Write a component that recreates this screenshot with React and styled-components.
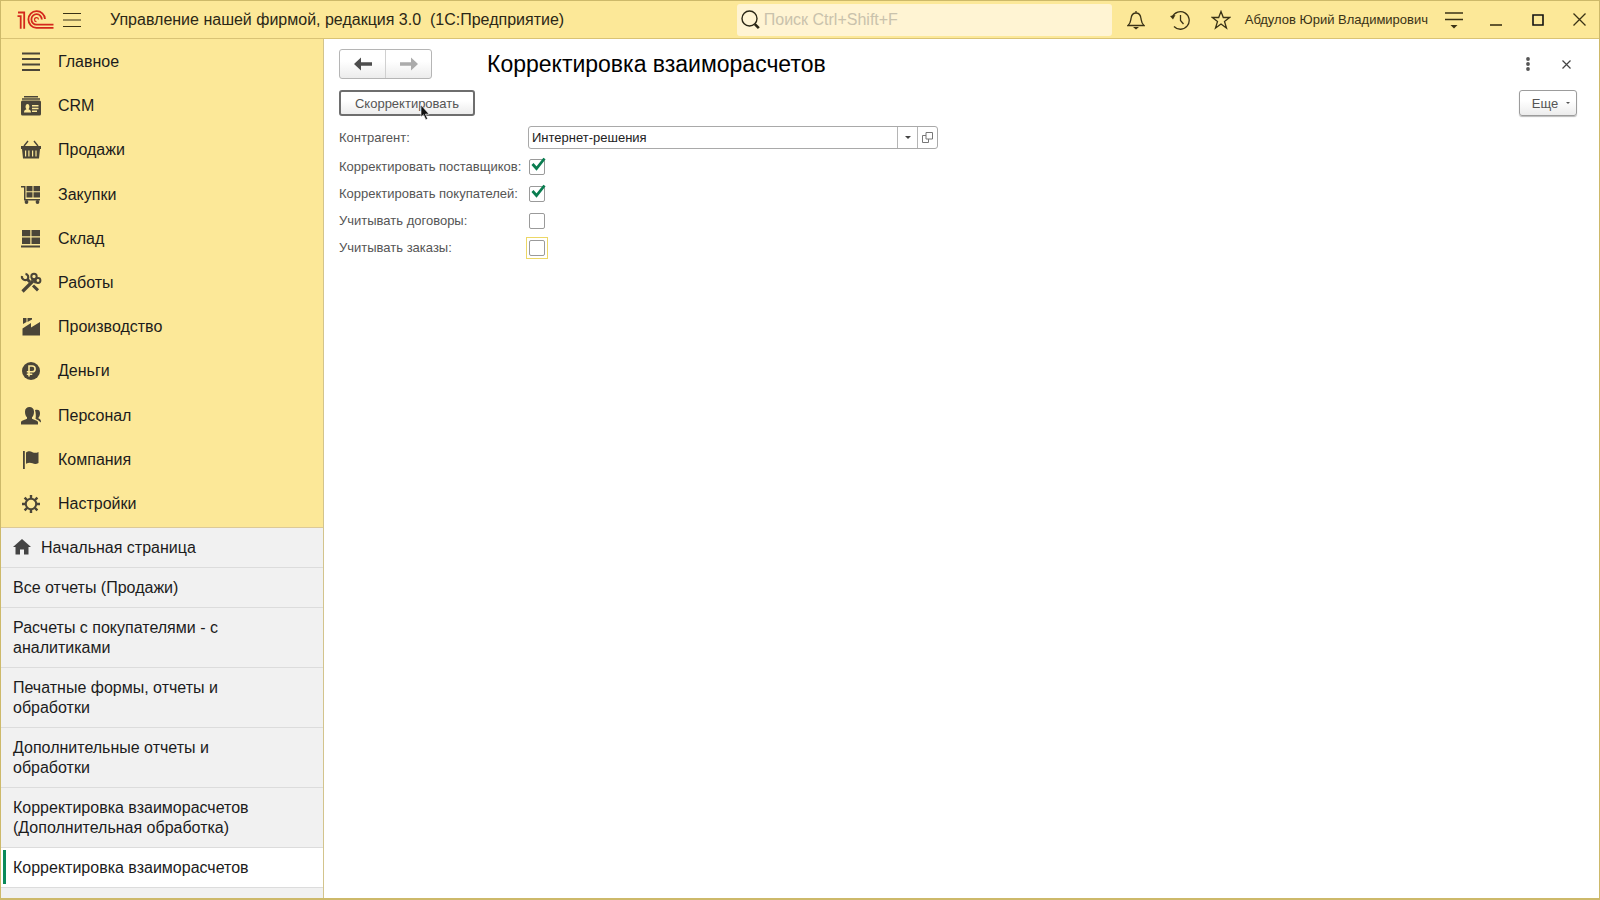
import { useState } from "react";
import styled, { createGlobalStyle } from "styled-components";

const GlobalStyle = createGlobalStyle`
    * {
        box-sizing: border-box;
    }
    body {
        margin: 0;
        font-family: "Liberation Sans", Arial, sans-serif;
        font-size: 16px;
        color: #1c1c1c;
    }
    button, input {
        font-family: inherit;
    }
`

const Window = styled.div`
    display: flex;
    flex-direction: column;
    min-height: 100vh;
    border: 1px solid #cdb96a;
    border-bottom-width: 2px;
    background: #fff;
`

const TopBar = styled.header`
    display: flex;
    align-items: center;
    height: 38px;
    padding-left: 16px;
    background: #fce898;
    border-bottom: 1px solid #d9c375;
`

const AppName = styled.div`
    flex: 1;
    padding-left: 20px;
    white-space: nowrap;
    color: #2b2716;
`

const IconButton = styled.button`
    display: flex;
    align-items: center;
    justify-content: center;
    width: ${(props) => props.$width || 42}px;
    height: 32px;
    padding: 0;
    border: 0;
    background: none;
    color: #3a3216;
`

const Search = styled.label`
    display: flex;
    align-items: center;
    gap: 4px;
    width: 375px;
    height: 32px;
    padding-left: 4px;
    border-radius: 3px;
    background: #fff4d3;
    color: #2b2716;
`

const SearchInput = styled.input`
    flex: 1;
    min-width: 0;
    padding: 0;
    border: 0;
    outline: 0;
    background: none;
    font-size: 16px;
    &::placeholder {
        color: #c9c2ac;
        opacity: 1;
    }
`

const UserName = styled.a`
    margin: 0 5px 0 3px;
    font-size: 13px;
    color: #3a3216;
    text-decoration: none;
    white-space: nowrap;
`

const Body = styled.div`
    display: flex;
    flex: 1;
`

const Sidebar = styled.aside`
    display: flex;
    flex-direction: column;
    width: 323px;
    flex-shrink: 0;
    border-right: 1px solid #d3c48c;
    background: #f1f1f1;
`

const Sections = styled.nav`
    display: flex;
    flex-direction: column;
    height: 489px;
    padding: 1px 0;
    background: #fce898;
    border-bottom: 1px solid #dcc998;
`

const Section = styled.a`
    display: flex;
    flex: 1;
    align-items: center;
    gap: 16px;
    padding-left: 19px;
    color: #1c1c1c;
    text-decoration: none;
    svg {
        color: #4a4538;
    }
`

const OpenPages = styled.nav`
    display: flex;
    flex-direction: column;
`

const OpenPage = styled.a`
    display: flex;
    align-items: center;
    gap: 10px;
    padding: 10px 60px 9px 12px;
    border-bottom: 1px solid #dcdcdc;
    line-height: 20px;
    color: #1c1c1c;
    text-decoration: none;
    background: ${(props) => (props.$active ? 'linear-gradient(#0a8a5a, #0a8a5a) 2px 2px / 3px 34px no-repeat #fff' : 'none')};
    svg {
        color: #444;
    }
`

const Page = styled.main`
    flex: 1;
    padding: 10px 14px 0 15px;
`

const PageHeader = styled.div`
    display: flex;
    align-items: center;
    height: 30px;
`

const History = styled.div`
    display: flex;
    width: 93px;
    height: 30px;
    margin-right: 55px;
    border: 1px solid #b5b5b5;
    border-radius: 3px;
    background: linear-gradient(#fff 40%, #ececec);
`

const HistoryButton = styled.button`
    display: flex;
    flex: 1;
    align-items: center;
    justify-content: center;
    padding: 0;
    border: 0;
    background: none;
    color: ${(props) => (props.disabled ? '#ababab' : '#4d4d4d')};
    & + & {
        border-left: 1px solid #d0d0d0;
    }
`

const Title = styled.h1`
    flex: 1;
    margin: 0;
    font-size: 23px;
    font-weight: 400;
    color: #000;
`

const CommandBar = styled.div`
    display: flex;
    justify-content: space-between;
    margin: 11px 8px 8px 0;
`

const CommandButton = styled.button`
    position: relative;
    display: flex;
    align-items: center;
    justify-content: center;
    gap: 8px;
    width: ${(props) => props.$width}px;
    height: 26px;
    padding: 0;
    border: ${(props) => (props.$primary ? '2px solid #6e6e6e' : '1px solid #9c9c9c')};
    border-radius: 3px;
    background: linear-gradient(#fff 40%, #ececec);
    box-shadow: ${(props) => (props.$primary ? 'none' : '0 1px 1px #bbb')};
    font-size: 13px;
    color: #555;
`

const MoreButton = styled(CommandButton)`
    padding-left: 6px;
`

const Pointer = styled.svg`
    position: absolute;
    left: 79px;
    top: 12px;
`

const Field = styled.div`
    display: flex;
    align-items: center;
    height: 27px;
    font-size: 13px;
    color: #555;
    label {
        width: 189px;
        white-space: nowrap;
    }
`

const ComboField = styled(Field)`
    margin-bottom: 2px;
`

const ComboBox = styled.div`
    display: flex;
    width: 410px;
    height: 23px;
    border: 1px solid #a9a9a9;
    border-radius: 3px;
    background: #fff;
`

const ComboInput = styled.input`
    flex: 1;
    min-width: 0;
    padding: 0 3px;
    border: 0;
    outline: 0;
    background: none;
    font-size: 13px;
    color: #222;
`

const ComboButton = styled.button`
    display: flex;
    align-items: center;
    justify-content: center;
    width: 20px;
    padding: 0;
    border: 0;
    border-left: 1px solid #b5b5b5;
    background: none;
    color: #444;
`

const CheckWrap = styled.span`
    position: relative;
    display: flex;
    margin-left: 1px;
    outline: ${(props) => (props.$highlighted ? '1px solid #ecd766' : 'none')};
    outline-offset: 2px;
    svg {
        position: absolute;
        left: 2px;
        top: -2px;
        pointer-events: none;
    }
`

const CheckInput = styled.input`
    appearance: none;
    width: 16px;
    height: 16px;
    margin: 0;
    border: 1px solid #9a9a9a;
    border-radius: 2px;
    background: #fff;
`

const sections = [
    { title: 'Главное', icon: <path d="M2 2.5h18M2 8h18M2 13.5h18M2 19h18" stroke="currentColor" strokeWidth="2" /> },
    { title: 'CRM', icon: <g fill="currentColor"><path d="M4 1h14v1.4H4zM2 3.2h18v1.6H2z" /><path fillRule="evenodd" d="M2.500 5.500h17a1.500 1.500 0 0 1 1.500 1.500v12a1.500 1.500 0 0 1-1.500 1.500h-17A1.500 1.500 0 0 1 1 19V7a1.500 1.500 0 0 1 1.500-1.500zM4 17.500h7c0-2-1-2.800-2.500-3.200 1.600-2 1-5.300-1-5.300s-2.600 3.300-1 5.300C5 14.700 4 15.500 4 17.500zM12 10v1.400h6.500V10zM12 12.800v1.400h6.500v-1.400zM12 15.600V17h5v-1.400z" /></g> },
    { title: 'Продажи', icon: <g fill="currentColor"><path d="M1 7h20v3H1z" /><path d="M4 7l4-5M18 7l-4-5" stroke="currentColor" strokeWidth="1.400" /><path fillRule="evenodd" d="M2 10h18l-1 9.500H3zM5 11.500v6h1.200v-6zM8.300 11.500v6h1.200v-6zM12 11.500v6h1.200v-6zM15.400 11.500v6h1.200v-6z" /></g> },
    { title: 'Закупки', icon: <g fill="currentColor"><path d="M1 2h4.500v13H20v1.600H4V3.500H1zM6.500 2h6v5.300h-6zM13.500 2h6.500v5.300h-6.500zM6.500 8.300h6v5.300h-6zM13.500 8.300h6.500v5.300h-6.500z" /><circle cx="6.500" cy="18" r="1.900" /><circle cx="17.500" cy="18" r="1.900" /></g> },
    { title: 'Склад', icon: <path fill="currentColor" d="M2 2h8.300v6.300H2zM11.500 2H20v6.300h-8.500zM2 9.500h8.300V16H2zM11.500 9.500H20V16h-8.500zM1 17.500h19v2H1z" /> },
    { title: 'Работы', icon: <g fill="none" stroke="currentColor"><path d="M2 4a3.400 3.400 0 0 0 5.500 3.300A3.400 3.400 0 0 0 5.500 1.800" strokeWidth="2.200" /><path d="M7 7l3 3M13 13.500l5 4.800" strokeWidth="3" /><path d="M2.500 19.500L13 9" strokeWidth="3.200" /><circle cx="14" cy="4.500" r="2.700" strokeWidth="2" /><circle cx="18" cy="8.500" r="2.400" strokeWidth="2" /><path d="M12 6.500l4 4.500" strokeWidth="2.500" /></g> },
    { title: 'Производство', icon: <path fill="currentColor" d="M3 2h3.500v4L3 8zM7.500 2H12v1.500L7.500 6zM2.500 19.500v-7L11 7v4.500L20 6v13.500z" /> },
    { title: 'Деньги', icon: <g><circle cx="11" cy="11" r="9" fill="currentColor" /><path d="M9 16.500V6h3.200a2.900 2.900 0 0 1 0 5.800H6.800M6.800 14.300h5.500" fill="none" stroke="#fce898" strokeWidth="1.600" /></g> },
    { title: 'Персонал', icon: <g fill="currentColor"><path d="M1 19.500v-2.200c0-1 1-1.700 6-3.500v-1.500C5.500 11 5 9 5 6.500 5 3.500 7 2 9.500 2S14 3.500 14 6.500c0 2.500-.500 4.500-2 5.800v1.500c5 1.800 6 2.500 6 3.500v2.200z" /><path d="M15 5c3-1 5 0 5 3 0 2-.500 3.500-1.500 4.500v1c2 .800 2.500 1.500 2.500 4l-1.500-1c-.500-1-2.500-1.800-4-2.700.500-2 .500-6-.500-8.800z" /></g> },
    { title: 'Компания', icon: <path fill="currentColor" d="M3 2h1.800v18H3zM6 3.500c2.500-1.800 4.500-1.300 6.500-.300 2 1 4 .800 6-.200v11c-2 1.200-4 1.200-6 .300s-4-1-6.500.500z" /> },
    { title: 'Настройки', icon: <g fill="none" stroke="currentColor"><circle cx="11" cy="11" r="5.200" strokeWidth="2" /><path d="M11 2v3.500M11 16.500V20M2 11h3.500M16.500 11H20M4.600 4.600l2.500 2.500M14.900 14.900l2.500 2.500M17.400 4.600l-2.500 2.500M7.100 14.900l-2.500 2.500" strokeWidth="2.400" /></g> },
]

const openPages = [
    'Начальная страница',
    'Все отчеты (Продажи)',
    'Расчеты с покупателями - с аналитиками',
    'Печатные формы, отчеты и обработки',
    'Дополнительные отчеты и обработки',
    'Корректировка взаиморасчетов (Дополнительная обработка)',
    'Корректировка взаиморасчетов',
]

function Logo() {
    return (
        <svg width="37" height="20" viewBox="0 0 37 20" fill="none" stroke="#d4281c" strokeWidth="1.800">
            <path d="M.5 6.200h3.200v12.500M1 2.500h6.200v16.200" />
            <path d="M28 9A8.300 8.300 0 1 0 19.500 17.800H36.500" />
            <path d="M24.800 9.500A5.200 5.200 0 1 0 19.500 14.600H36.500" />
            <path d="M21.500 9.500A2 2 0 1 0 19.500 11.700" strokeWidth="1.200" />
        </svg>
    )
}

function Caret({ size = 6 }) {
    return (
        <svg width={size} height={size / 2} viewBox="0 0 6 3">
            <path d="M0 0h6L3 3z" fill="currentColor" />
        </svg>
    )
}

function Arrow({ right }) {
    return (
        <svg width="18" height="14" viewBox="0 0 18 14" fill="currentColor">
            <path d={right ? "M18 7l-7-6.500v4.800H0v3.400h11v4.800z" : "M0 7l7-6.500v4.800h11v3.400H7v4.800z"} />
        </svg>
    )
}

function CheckField({ id, title, initial, highlighted }) {
    const [checked, setChecked] = useState(initial);

    return (
        <Field>
            <label htmlFor={id}>{title}</label>
            <CheckWrap $highlighted={highlighted}>
                <CheckInput
                    type="checkbox"
                    id={id}
                    checked={checked}
                    onChange={(e) => setChecked(e.target.checked)}
                />
                {checked && <svg width="15" height="14" viewBox="0 0 15 14">
                    <path d="M1.500 7l4 4.500L13.500 1.500" fill="none" stroke="#0a7d50" strokeWidth="2.800" />
                </svg>}
            </CheckWrap>
        </Field>
    )
}

export default function App() {
    const [partner, setPartner] = useState('Интернет-решения');

    return (
        <>
            <GlobalStyle />
            <Window>
                <TopBar>
                    <Logo />
                    <IconButton $width={36} aria-label="Меню">
                        <svg width="18" height="16" viewBox="0 0 18 16"><path d="M0 1.500h18M0 8h18M0 14.500h18" stroke="currentColor" strokeWidth="1.200" /></svg>
                    </IconButton>
                    <AppName>Управление нашей фирмой, редакция 3.0&nbsp; (1С:Предприятие)</AppName>
                    <Search>
                        <svg width="19" height="20" viewBox="0 0 19 20" fill="none" stroke="currentColor">
                            <circle cx="8.500" cy="8.500" r="7.500" strokeWidth="1.400" />
                            <path d="M13.800 14.200l4 4" strokeWidth="2.600" />
                        </svg>
                        <SearchInput placeholder="Поиск Ctrl+Shift+F" aria-label="Поиск" />
                    </Search>
                    <IconButton $width={48} aria-label="Уведомления">
                        <svg width="18" height="20" viewBox="0 0 18 20" fill="none" stroke="currentColor" strokeWidth="1.300">
                            <path d="M1 15.500c3-2.500 2.500-5 3.200-8C4.800 4.500 6.500 3 9 3s4.200 1.500 4.800 4.500c.700 3 .200 5.500 3.200 8zM9 3V1" />
                            <path d="M6 17h6L9 19.500z" fill="currentColor" stroke="none" />
                        </svg>
                    </IconButton>
                    <IconButton $width={40} aria-label="История">
                        <svg width="20" height="20" viewBox="0 0 20 20" fill="none" stroke="currentColor" strokeWidth="1.300">
                            <path d="M2.300 7A8.800 8.800 0 1 1 4 16.500M10.500 5v5.500l3 3.500" />
                            <path d="M0 6l5.500-1L3 9.500z" fill="currentColor" stroke="none" />
                        </svg>
                    </IconButton>
                    <IconButton aria-label="Избранное">
                        <svg width="20" height="20" viewBox="0 0 20 20" fill="none" stroke="currentColor" strokeWidth="1.300">
                            <path d="M10 1.500l2.300 6h6.400l-5.200 4 2 6.500-5.500-4-5.500 4 2-6.500-5.200-4h6.400z" />
                        </svg>
                    </IconButton>
                    <UserName href="#user">Абдулов Юрий Владимирович</UserName>
                    <IconButton aria-label="Сервис">
                        <svg width="18" height="18" viewBox="0 0 18 18">
                            <path d="M0 2h18M0 8.500h18" stroke="currentColor" strokeWidth="1.400" />
                            <path d="M5.500 14h7L9 17.500z" fill="currentColor" />
                        </svg>
                    </IconButton>
                    <IconButton aria-label="Свернуть">
                        <svg width="12" height="12" viewBox="0 0 12 12"><path d="M0 11h12" stroke="currentColor" strokeWidth="1.600" /></svg>
                    </IconButton>
                    <IconButton aria-label="Развернуть">
                        <svg width="12" height="12" viewBox="0 0 12 12"><path d="M1 1h10v10H1z" fill="none" stroke="#111" strokeWidth="1.600" /></svg>
                    </IconButton>
                    <IconButton $width={40} aria-label="Закрыть">
                        <svg width="13" height="13" viewBox="0 0 13 13"><path d="M.5 .5l12 12M12.500 .5l-12 12" stroke="currentColor" strokeWidth="1.300" /></svg>
                    </IconButton>
                </TopBar>
                <Body>
                    <Sidebar>
                        <Sections>
                            {sections.map((item) => (
                                <Section href="#section" key={item.title}>
                                    <svg width="22" height="22" viewBox="0 0 22 22">{item.icon}</svg>
                                    {item.title}
                                </Section>
                            ))}
                        </Sections>
                        <OpenPages>
                            {openPages.map((page, index) => (
                                <OpenPage href="#page" key={page} $active={index === openPages.length - 1}>
                                    {index === 0 && <svg width="18" height="18" viewBox="0 0 18 18">
                                        <path d="M9 0l9 8h-2.500v7.500H11v-5H7v5H2.500V8H0z" fill="currentColor" />
                                    </svg>}
                                    {page}
                                </OpenPage>
                            ))}
                        </OpenPages>
                    </Sidebar>
                    <Page>
                        <PageHeader>
                            <History>
                                <HistoryButton aria-label="Назад"><Arrow /></HistoryButton>
                                <HistoryButton aria-label="Вперед" disabled><Arrow right /></HistoryButton>
                            </History>
                            <Title>Корректировка взаиморасчетов</Title>
                            <IconButton $width={38} aria-label="Действия">
                                <svg width="4" height="14" viewBox="0 0 4 14" fill="#555">
                                    <circle cx="2" cy="2" r="1.900" />
                                    <circle cx="2" cy="7" r="1.900" />
                                    <circle cx="2" cy="12" r="1.900" />
                                </svg>
                            </IconButton>
                            <IconButton $width={38} aria-label="Закрыть страницу">
                                <svg width="9" height="9" viewBox="0 0 9 9"><path d="M.5 .5l8 8M8.500 .5l-8 8" stroke="#444" strokeWidth="1.200" /></svg>
                            </IconButton>
                        </PageHeader>
                        <CommandBar>
                            <CommandButton $primary $width={136}>
                                Скорректировать
                                <Pointer width="10" height="17" viewBox="0 0 10 17">
                                    <path d="M1 1v12l2.500-2.300 2.300 5 1.800-.900-2.200-4.700H9z" fill="#111" stroke="#fff" strokeWidth=".6" />
                                </Pointer>
                            </CommandButton>
                            <MoreButton $width={58}>Еще <Caret size={4} /></MoreButton>
                        </CommandBar>
                        <ComboField>
                            <label htmlFor="partner">Контрагент:</label>
                            <ComboBox>
                                <ComboInput id="partner" value={partner} onChange={(e) => setPartner(e.target.value)} />
                                <ComboButton aria-label="Выбрать"><Caret /></ComboButton>
                                <ComboButton aria-label="Открыть">
                                    <svg width="11" height="11" viewBox="0 0 11 11" fill="none" stroke="#777">
                                        <path d="M4 .5h6.500V7H4zM4 3.500H.5v7h6V7" />
                                    </svg>
                                </ComboButton>
                            </ComboBox>
                        </ComboField>
                        <CheckField id="suppliers" title="Корректировать поставщиков:" initial={true} />
                        <CheckField id="customers" title="Корректировать покупателей:" initial={true} />
                        <CheckField id="contracts" title="Учитывать договоры:" initial={false} />
                        <CheckField id="orders" title="Учитывать заказы:" initial={false} highlighted />
                    </Page>
                </Body>
            </Window>
        </>
    )
}
